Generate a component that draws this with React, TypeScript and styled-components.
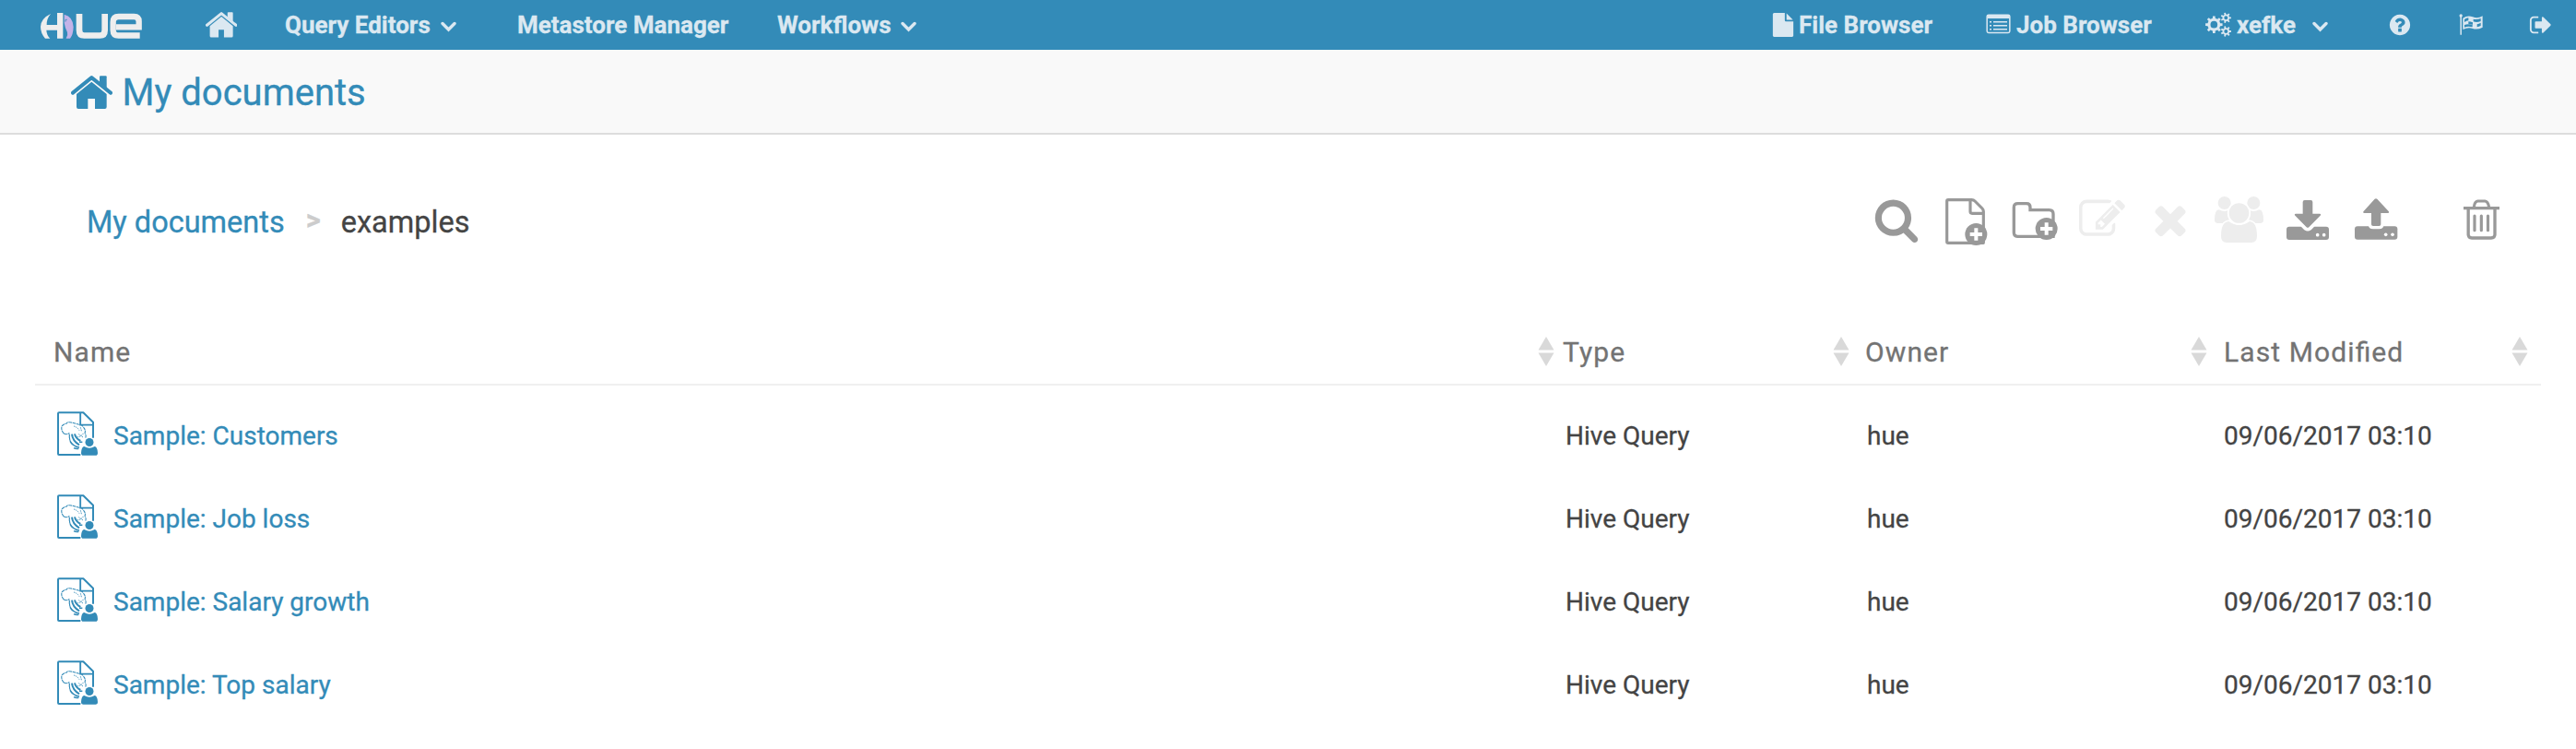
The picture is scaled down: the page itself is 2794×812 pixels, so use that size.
import React from "react";
import styled, { createGlobalStyle } from "styled-components";

const BLUE = "#338bb8";
const NAV_TEXT = "#dbe8f1";
const GREY = "#999";
const FAINT = "#ededed";

const GlobalStyle = createGlobalStyle`
  *, *::before, *::after { box-sizing: border-box; }
  body { margin: 0; background: #fff; color: #444; font-family: Roboto, "Open Sans", sans-serif; -webkit-text-stroke: 0.3px currentColor; }
  svg { display: block; flex: none; }
`;

/* ---------- layout ---------- */

const NavBar = styled.nav`
  display: flex;
  height: 54px;
  padding-left: 40px;
  background: ${BLUE};
  color: ${NAV_TEXT};
  font-size: 26px;
  font-weight: 700;
`;

const NavSide = styled.div<{ $end?: boolean }>`
  display: flex;
  margin-left: ${(p) => (p.$end ? "auto" : "0")};
`;

const NavItem = styled.a<{ $width: number; $gap?: number }>`
  display: flex;
  flex: none;
  align-items: center;
  gap: ${(p) => p.$gap ?? 0}px;
  width: ${(p) => p.$width}px;
  height: 54px;
  line-height: 54px;
  white-space: nowrap;
`;

const TitleBar = styled.header`
  display: flex;
  align-items: center;
  gap: 11px;
  height: 92px;
  padding: 2px 0 0 76.5px;
  background: #f9f9f9;
  border-bottom: 2px solid #ddd;
  color: ${BLUE};
`;

const Title = styled.h1`
  margin: 0;
  padding-top: 2px;
  font-size: 40px;
  font-weight: 400;
  line-height: 48px;
`;

const ActionBar = styled.div`
  display: flex;
  align-items: center;
  justify-content: space-between;
  height: 100px;
  margin-top: 44px;
  padding: 0 66px 0 94px;
`;

const Breadcrumbs = styled.div`
  display: flex;
  align-items: center;
  padding-top: 2px;
  font-size: 32.5px;
  line-height: 40px;
`;

const CrumbLink = styled.a`
  color: ${BLUE};
`;

const CrumbDivider = styled.span`
  width: 61px;
  padding: 0 0 4px 1px;
  color: #ccc;
  font-size: 31px;
  font-weight: 700;
  text-align: center;
`;

const Tools = styled.div`
  display: flex;
`;

const ToolButton = styled.span<{ $disabled?: boolean; $apart?: boolean }>`
  width: 74px;
  height: 100px;
  margin-left: ${(p) => (p.$apart ? "42px" : "0")};
  color: ${(p) => (p.$disabled ? FAINT : GREY)};
`;

const Table = styled.div`
  margin: 56px 38px 0;
`;

const columns = "1652px 320px 388px 348px";

const HeadRow = styled.div`
  display: grid;
  grid-template-columns: ${columns};
  height: 72px;
  border-bottom: 2px solid #f0f0f0;
`;

const HeadCell = styled.div<{ $pad: number }>`
  display: flex;
  align-items: center;
  justify-content: space-between;
  padding: 0 4px 0 ${(p) => p.$pad}px;
  color: #737373;
  font-size: 30px;
  letter-spacing: 1.1px;
  font-feature-settings: "liga" 1;
`;

const Body = styled.div`
  padding-top: 9px;
`;

const Row = styled.div`
  display: grid;
  grid-template-columns: ${columns};
  height: 90px;
  font-size: 28px;
`;

const Cell = styled.div<{ $pad: number }>`
  display: flex;
  align-items: center;
  padding-left: ${(p) => p.$pad}px;
`;

const DocLink = styled.a`
  margin-left: 11px;
  color: ${BLUE};
`;

const IconBox = styled.span<{ $x: number; $y: number }>`
  display: block;
  padding: ${(p) => p.$y}px 0 0 ${(p) => p.$x}px;
`;

/* ---------- icons ---------- */

/* Solid glyph on a 1792-unit grid. */
const Glyph = ({ d, size }: { d: string; size: number }) => (
  <svg width={size} height={size} viewBox="0 0 1792 1792" fill="currentColor">
    <path d={d} />
  </svg>
);

const FILE =
  "M1152 512v-472q22 14 36 28l408 408q14 14 28 36h-472zm-128 32q0 40 28 68t68 28h544v1056q0 40-28 68t-68 28h-1344q-40 0-68-28t-28-68v-1600q0-40 28-68t68-28h800v544z";
const HELP =
  "M1024 1376v-192q0-14-9-23t-23-9h-192q-14 0-23 9t-9 23v192q0 14 9 23t23 9h192q14 0 23-9t9-23zm256-672q0-88-55.5-163t-138.5-116-170-41q-243 0-371 213-15 24 8 42l132 100q7 6 19 6 16 0 25-12 53-68 86-92 34-24 86-24 48 0 85.5 26t37.5 59q0 38-20 61t-68 45q-63 28-115.5 86.5t-52.5 125.5v36q0 14 9 23t23 9h192q14 0 23-9t9-23q0-19 21.5-49.5t54.5-49.5q32-18 49-28.5t46-35 44.5-48 28-60.5 12.5-81zm384 192q0 209-103 385.5t-279.5 279.5-385.5 103-385.5-103-279.5-279.5-103-385.5 103-385.5 279.5-279.5 385.5-103 385.5 103 279.5 279.5 103 385.5z";
const LOGOUT =
  "M704 1440q0 4 1 20t.5 26.5-3 23.5-10 19.5-20.5 6.5h-320q-119 0-203.5-84.5t-84.5-203.5v-704q0-119 84.5-203.5t203.5-84.5h320q13 0 22.5 9.5t9.5 22.5q0 4 1 20t.5 26.5-3 23.5-10 19.5-20.5 6.5h-320q-66 0-113 47t-47 113v704q0 66 47 113t113 47h312l11.5 1 11.5 3 8 5.5 7 9 2 13.5zm928-544q0 26-19 45l-544 544q-19 19-45 19t-45-19-19-45v-288h-448q-26 0-45-19t-19-45v-384q0-26 19-45t45-19h448v-288q0-26 19-45t45-19 45 19l544 544q19 19 19 45z";
const SEARCH =
  "M1216 832q0-185-131.5-316.5t-316.5-131.5-316.5 131.5-131.5 316.5 131.5 316.5 316.5 131.5 316.5-131.5 131.5-316.5zm512 832q0 52-38 90t-90 38q-54 0-90-38l-343-342q-179 124-399 124-143 0-273.5-55.5t-225-150-150-225-55.5-273.5 55.5-273.5 150-225 225-150 273.5-55.5 273.5 55.5 225 150 150 225 55.5 273.5q0 220-124 399l343 343q37 37 37 90z";
const EDIT =
  "M888 1184l116-116-152-152-116 116v56h96v96h56zm440-720q-16-16-33 1l-350 350q-17 17-1 33t33-1l350-350q17-17 1-33zm80 594v190q0 119-84.5 203.5t-203.5 84.5h-832q-119 0-203.5-84.5t-84.5-203.5v-832q0-119 84.5-203.5t203.5-84.5h832q63 0 117 25 15 7 18 23 3 17-9 29l-49 49q-14 14-32 8-23-6-45-6h-832q-66 0-113 47t-47 113v832q0 66 47 113t113 47h832q66 0 113-47t47-113v-126q0-13 9-22l64-64q15-15 35-7t20 29zm-96-738l288 288-672 672h-288v-288zm444 132l-92 92-288-288 92-92q28-28 68-28t68 28l152 152q28 28 28 68t-28 68z";
const CROSS =
  "M1490 1322q0 40-28 68l-136 136q-28 28-68 28t-68-28l-294-294-294 294q-28 28-68 28t-68-28l-136-136q-28-28-28-68t28-68l294-294-294-294q-28-28-28-68t28-68l136-136q28-28 68-28t68 28l294 294 294-294q28-28 68-28t68 28l136 136q28 28 28 68t-28 68l-294 294 294 294q28 28 28 68z";

const Logo = () => (
  <svg width="120" height="54" viewBox="120 0 360 162" fill="none">
    <path
      d="M165 45Q151 62 152 81H186V42H205V125H186V98H151Q152 115 163 125H147Q132 108 132 87Q133 60 165 45Z"
      fill="#eee"
    />
    <path d="M209 47Q238 54 239 88Q238 114 228 125H215Q222 116 219 105Q211 88 209 74Z" fill="#c4b3e8" />
    <path d="M213 71V64H218" stroke={BLUE} strokeWidth="2.500" />
    <path d="M258 45V98Q258 115.500 274 115.500H325Q341 115.500 341 98V45" stroke="#eee" strokeWidth="20" />
    <path
      d="M455 115.500H386Q368 115.500 368 98V72Q368 54 386 54H436Q452 54 452 70V88H378"
      stroke="#eee"
      strokeWidth="19"
    />
  </svg>
);

const Home = ({ width }: { width: number }) => (
  <svg width={width} height={(width * 108) / 135} viewBox="231 246 135 108" fill="currentColor">
    <path d="M324 268V250Q324 247 327 247H344Q347 247 347 250V287Z" />
    <path d="M237 302L298 252.500L360 302" fill="none" stroke="currentColor" strokeWidth="12" strokeLinecap="round" strokeLinejoin="round" />
    <path
      d="M249 306L298 266L347 306V348Q347 354 341 354H309V321H286V354H255Q249 354 249 348Z"
      stroke="none"
    />
  </svg>
);

const Caret = () => (
  <svg width="17" height="54" viewBox="0 0 17 54" fill="none">
    <path d="M2 25.500L8.500 32L15 25.500" stroke="currentColor" strokeWidth="3.400" strokeLinecap="round" />
  </svg>
);

const ListBox = () => (
  <svg width="27" height="54" viewBox="762 0 81 162" fill="none" stroke="currentColor">
    <rect x="765.500" y="48.500" width="74" height="58" rx="5" strokeWidth="4.500" />
    <path d="M766 54H839" strokeWidth="12" />
    <path d="M786 71H831M786 83H831M786 95H831" strokeWidth="4.500" />
    <path d="M774 71H780M774 83H780M774 95H780" strokeWidth="4.500" />
  </svg>
);

const cog = (cx: number, cy: number, outer: number, inner: number, teeth: number) => {
  const step = (Math.PI * 2) / teeth;
  const at = (r: number, a: number) => `${(cx + r * Math.cos(a)).toFixed(1)} ${(cy + r * Math.sin(a)).toFixed(1)}`;
  const points: string[] = [];
  for (let i = 0; i < teeth; i++) {
    const a = i * step;
    points.push(at(inner, a - step * 0.27), at(outer, a - step * 0.18), at(outer, a + step * 0.18), at(inner, a + step * 0.27));
  }
  return `M${points.join("L")}Z`;
};
const hole = (cx: number, cy: number, r: number) =>
  `M${cx - r} ${cy}a${r} ${r} 0 1 0 ${2 * r} 0a${r} ${r} 0 1 0 ${-2 * r} 0Z`;

const Cogs = () => (
  <svg width="36" height="54" viewBox="150 0 108 162" fill="currentColor" fillRule="evenodd">
    <path d={cog(184, 80, 28, 21, 8) + hole(184, 80, 11.5)} />
    <path d={cog(223, 58, 17, 11.5, 7) + hole(223, 58, 6)} />
    <path d={cog(223, 102, 17, 11.5, 7) + hole(223, 102, 6)} />
  </svg>
);

const Flag = () => (
  <svg width="28" height="54" viewBox="976 0 84 162" fill="none">
    <circle cx="985.500" cy="51" r="5" fill="currentColor" />
    <path d="M985.500 52V113" stroke="currentColor" strokeWidth="4.500" />
    <path d="M992 59Q1008 48 1024 55T1056 52V89Q1039 98 1024 93T992 96Z" fill="currentColor" />
    <path
      d="M997 63Q1003 59 1010 58V67Q1003 68 997 72ZM1026 62Q1037 65 1050 60V69Q1037 74 1026 70ZM1010 70Q1017 70 1024 73V80Q1017 78 1010 78ZM997 81Q1008 76 1023 81V88Q1008 84 997 89ZM1038 79Q1044 78 1050 74V84Q1044 87 1038 88Z"
      fill={BLUE}
    />
  </svg>
);

const PlusBadge = ({ cx, cy }: { cx: number; cy: number }) => (
  <>
    <circle cx={cx} cy={cy} r="36" fill="currentColor" stroke="none" />
    <path d={`M${cx - 20} ${cy}H${cx + 20}M${cx} ${cy - 20}V${cy + 20}`} stroke="#fff" strokeWidth="12" />
  </>
);

const FilePlus = () => (
  <svg width="74" height="100" viewBox="252 0 222 300" fill="none" stroke="currentColor" strokeWidth="9.500" strokeLinejoin="round">
    <path d="M309 80H386Q392 80 396 84L420 108Q424 112 424 118V220H309Q305 220 305 216V84Q305 80 309 80Z" />
    <path d="M381 80V118Q381 124 387 124H424" />
    <PlusBadge cx={400} cy={192} />
  </svg>
);

const FolderPlus = () => (
  <svg width="74" height="100" viewBox="474 0 222 300" fill="none" stroke="currentColor" strokeWidth="10">
    <path d="M523 104Q523 92 536 92H564Q576 92 576 104V113H638Q651 113 651 126V199H536Q523 199 523 186Z" />
    <PlusBadge cx={629} cy={174} />
  </svg>
);

const People = () => (
  <svg width="74" height="100" viewBox="30 0 222 300" fill="currentColor">
    <circle cx="98" cy="90" r="21" />
    <circle cx="193" cy="90" r="21" />
    <path d="M66 148Q65 113 80 112Q98 122 116 112L112 156H74Q67 156 66 148Z" />
    <path d="M225 148Q226 113 211 112Q193 122 175 112L179 156H217Q224 156 225 148Z" />
    <path
      d="M112 150Q146 174 180 150Q204 152 204 198Q204 219 185 219H106Q87 219 87 198Q87 152 112 150Z"
      stroke="#fff"
      strokeWidth="9"
      paintOrder="stroke"
    />
    <circle cx="145.500" cy="123" r="32.500" stroke="#fff" strokeWidth="11" paintOrder="stroke" />
  </svg>
);

const Download = () => (
  <svg width="74" height="100" viewBox="252 0 222 300" fill="currentColor" strokeLinejoin="round">
    <rect x="300" y="167" width="138" height="43" rx="9" />
    <path
      d="M353 87Q353 81 359 81H379Q385 81 385 87V125H408Q414 126 410 131L373 169Q369 172 365 169L328 131Q324 126 330 125H353Z"
      stroke="#fff"
      strokeWidth="22"
      paintOrder="stroke"
    />
    <circle cx="401" cy="194" r="5.500" fill="#fff" />
    <circle cx="422" cy="194" r="5.500" fill="#fff" />
  </svg>
);

const Upload = () => (
  <svg width="74" height="100" viewBox="474 0 222 300" fill="currentColor" strokeLinejoin="round">
    <rect x="522" y="166" width="139" height="43" rx="9" />
    <path
      d="M576 123H553Q547 122 551 117L587 77Q591 74 595 77L632 117Q636 122 630 123H607V160Q607 165 601 165H582Q576 165 576 160Z"
      stroke="#fff"
      strokeWidth="20"
      paintOrder="stroke"
    />
    <circle cx="623" cy="193" r="5.500" fill="#fff" />
    <circle cx="645" cy="193" r="5.500" fill="#fff" />
  </svg>
);

const Trash = () => (
  <svg width="74" height="100" viewBox="822 0 222 300" fill="none" stroke="currentColor">
    <path d="M876 107H993" strokeWidth="10" />
    <path d="M910 104Q912 85 922 84H946Q956 85 959 104" strokeWidth="9.500" />
    <path d="M891.500 110V192Q891.500 204 903 204H966Q978 204 978 192V110" strokeWidth="10" />
    <path d="M912 132V179M934 132V179M955.500 132V179" strokeWidth="9.500" strokeLinecap="round" />
  </svg>
);

const HiveDoc = () => (
  <svg width="54" height="90" viewBox="84 681 162 270" fill="none" stroke={BLUE}>
    <path
      d="M172 879H102Q99 879 99 876V745Q99 741.500 102 741.500H181L213 773V824"
      strokeWidth="6"
      strokeLinejoin="round"
    />
    <path d="M171.500 742V782H213" strokeWidth="5.500" />
    <path
      d="M118 810Q108 800 111 786Q118 778 127 777Q130 771 142 774L165 780Q176 780 182 790Q190 800 186 808Q192 818 188 824M118 810Q128 815 136 808"
      strokeWidth="3.200"
      strokeDasharray="11 2"
    />
    <path d="M150 786Q163 790 168 800M160 822Q176 820 182 808M172 790L176 804M166 812L180 822" strokeWidth="3" strokeDasharray="4 3" />
    <path d="M136 812Q134 834 146 846" strokeWidth="3.500" />
    <path d="M144 812Q146 834 168 847M153 811Q156 826 172 834" strokeWidth="6" />
    <path d="M138 835Q148 852 168 855M150 857Q158 861 166 859M168 838L178 838" strokeWidth="4.500" />
    <circle cx="201" cy="838.500" r="13.500" fill={BLUE} stroke="#fff" strokeWidth="4" paintOrder="stroke" />
    <path
      d="M184 852Q201 863 218 852Q227 853 228 873Q228 881.500 221 881.500H181Q174 881.500 174 873Q175 853 184 852Z"
      fill={BLUE}
      stroke="none"
    />
  </svg>
);

const SortArrows = () => (
  <svg width="18" height="32" viewBox="0 0 18 32">
    <path d="M9 0L17.500 14.500H0.500Z" fill="#d9d9d9" />
    <path d="M9 32L17.500 17.500H0.500Z" fill="#d9d9d9" />
  </svg>
);

/* ---------- page ---------- */

const heads = [
  { label: "Name", pad: 20 },
  { label: "Type", pad: 5 },
  { label: "Owner", pad: 13 },
  { label: "Last Modified", pad: 14 },
];

const docs = ["Sample: Customers", "Sample: Job loss", "Sample: Salary growth", "Sample: Top salary"].map((name) => ({
  name,
  type: "Hive Query",
  owner: "hue",
  modified: "09/06/2017 03:10",
}));

export default function App() {
  return (
    <>
      <GlobalStyle />
      <NavBar>
        <NavSide>
          <NavItem $width={182.5}><Logo /></NavItem>
          <NavItem $width={86.5}><Home width={34.5} /></NavItem>
          <NavItem $width={252} $gap={11.5}>Query Editors<Caret /></NavItem>
          <NavItem $width={282}>Metastore Manager</NavItem>
          <NavItem $width={170} $gap={10.5}>Workflows<Caret /></NavItem>
        </NavSide>
        <NavSide $end>
          <NavItem $width={233.5} $gap={4.5}><Glyph d={FILE} size={26} />File Browser</NavItem>
          <NavItem $width={236} $gap={6}><ListBox />Job Browser</NavItem>
          <NavItem $width={199.5}><Cogs />xefke<IconBox $x={18} $y={0}><Caret /></IconBox></NavItem>
          <NavItem $width={76}><Glyph d={HELP} size={26} /></NavItem>
          <NavItem $width={77.5}><Flag /></NavItem>
          <NavItem $width={51}><Glyph d={LOGOUT} size={26} /></NavItem>
        </NavSide>
      </NavBar>

      <TitleBar>
        <Home width={45} />
        <Title>My documents</Title>
      </TitleBar>

      <ActionBar>
        <Breadcrumbs>
          <CrumbLink>My documents</CrumbLink>
          <CrumbDivider>&gt;</CrumbDivider>
          <span>examples</span>
        </Breadcrumbs>
        <Tools>
          <ToolButton><IconBox $x={12} $y={23}><Glyph d={SEARCH} size={50} /></IconBox></ToolButton>
          <ToolButton><FilePlus /></ToolButton>
          <ToolButton><FolderPlus /></ToolButton>
          <ToolButton $disabled><IconBox $x={13} $y={23}><Glyph d={EDIT} size={50} /></IconBox></ToolButton>
          <ToolButton $disabled><IconBox $x={13} $y={23}><Glyph d={CROSS} size={50} /></IconBox></ToolButton>
          <ToolButton $disabled><People /></ToolButton>
          <ToolButton><Download /></ToolButton>
          <ToolButton><Upload /></ToolButton>
          <ToolButton $apart><Trash /></ToolButton>
        </Tools>
      </ActionBar>

      <Table>
        <HeadRow>
          {heads.map((h) => (
            <HeadCell key={h.label} $pad={h.pad}>
              {h.label}
              <SortArrows />
            </HeadCell>
          ))}
        </HeadRow>
        <Body>
          {docs.map((doc) => (
            <Row key={doc.name}>
              <Cell $pad={20}>
                <HiveDoc />
                <DocLink>{doc.name}</DocLink>
              </Cell>
              <Cell $pad={8}>{doc.type}</Cell>
              <Cell $pad={15}>{doc.owner}</Cell>
              <Cell $pad={14}>{doc.modified}</Cell>
            </Row>
          ))}
        </Body>
      </Table>
    </>
  );
}
